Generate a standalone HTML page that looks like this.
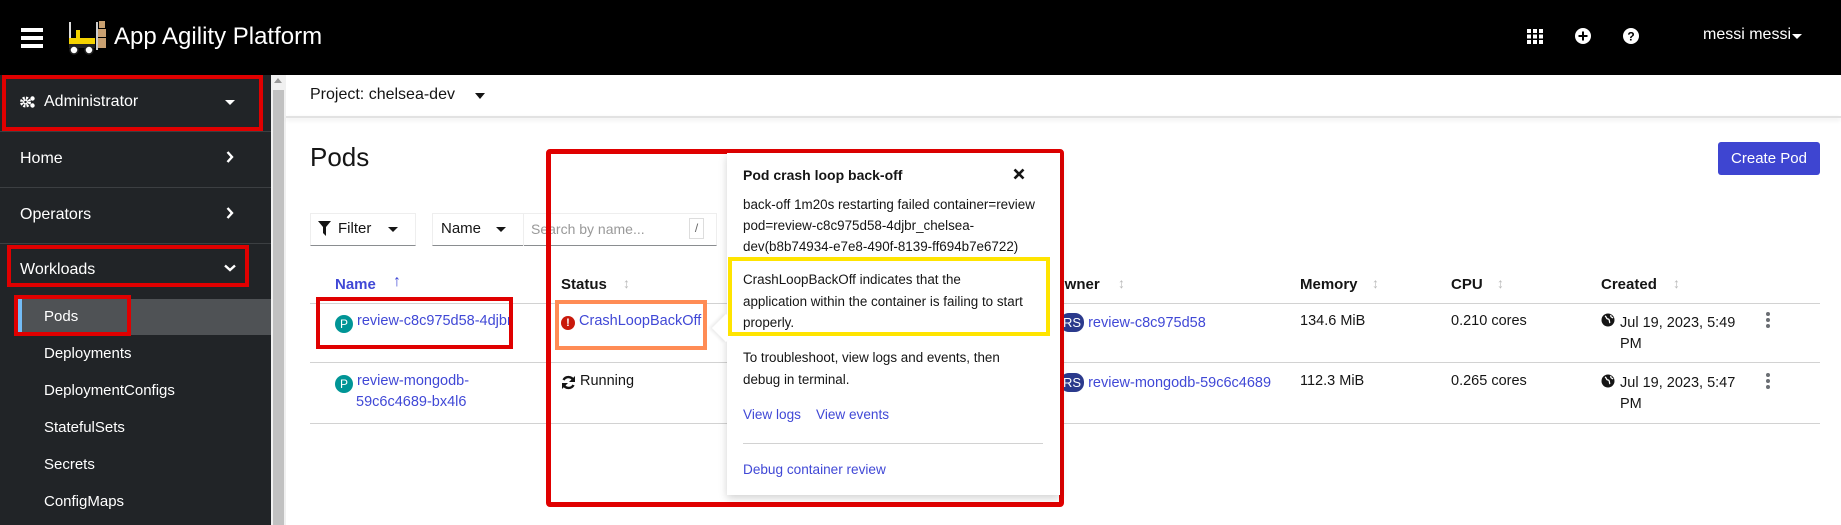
<!DOCTYPE html>
<html><head><meta charset="utf-8"><style>
*{box-sizing:border-box;margin:0;padding:0}
body{width:1841px;height:525px;overflow:hidden;background:#fff;font-family:"Liberation Sans",sans-serif;position:relative;color:#151515}
.a{position:absolute;white-space:nowrap}
.hdr{left:0;top:0;width:1841px;height:75px;background:#000}
.side{left:0;top:75px;width:271px;height:450px;background:#212427}
.sb{left:271px;top:75px;width:15px;height:450px;background:#f0f0f0}
.sbt{left:273px;top:90px;width:11px;height:435px;background:#c1c1c1}
.nav{color:#fff;font-size:16px}
.sep{left:0;width:271px;height:1px;background:#3c3f42}
.sub{color:#fff;font-size:15px;left:44px}
.red{border:4px solid #e00000}
.lnk{color:#4048d6}
.th{font-weight:bold;font-size:15px;color:#151515}
.td{font-size:14.5px}
.row{left:310px;width:1510px;height:1px;background:#d2d2d2}
.sort{color:#bbb;font-size:14px}
.pop p{font-size:13.4px;line-height:21px}
.badge{display:inline-block;width:18px;height:18px;border-radius:50%;background:#009596;color:#fff;font-size:12px;text-align:center;line-height:18px;vertical-align:-3px}
.rs{display:inline-block;background:#2b3a8c;color:#fff;font-size:13px;padding:0 3px;border-radius:9px;line-height:19px;vertical-align:0}
</style></head><body>
<div class="a hdr"></div>
<div class="a" style="left:21px;top:28px;width:22px;height:4px;background:#fff;box-shadow:0 8px 0 #fff,0 16px 0 #fff"></div>
<svg class="a" style="left:66px;top:18px" width="42" height="38" viewBox="0 0 42 38">
<rect x="3" y="4" width="2" height="18" fill="#ddd"/><rect x="10" y="12" width="4" height="8" fill="#f0d000"/>
<rect x="3" y="20" width="26" height="10" fill="#f5d300"/><rect x="3" y="26" width="26" height="4" fill="#222"/>
<circle cx="8" cy="32" r="4" fill="#fff" stroke="#222" stroke-width="1.5"/><circle cx="23" cy="32" r="4" fill="#fff" stroke="#222" stroke-width="1.5"/>
<rect x="30" y="4" width="2" height="28" fill="#ccc"/>
<rect x="33" y="3" width="6" height="7" fill="#c9a070"/><rect x="32" y="11" width="8" height="8" fill="#c9a070"/><rect x="32" y="20" width="8" height="10" fill="#c9a070"/>
</svg>
<div class="a" style="left:114px;top:23px;color:#fff;font-size:24px">App Agility Platform</div>
<svg class="a" style="left:1527px;top:29px" width="16" height="15" viewBox="0 0 16 15" fill="#fff"><rect x="0" y="0" width="4" height="4"/><rect x="6" y="0" width="4" height="4"/><rect x="12" y="0" width="4" height="4"/><rect x="0" y="5.5" width="4" height="4"/><rect x="6" y="5.5" width="4" height="4"/><rect x="12" y="5.5" width="4" height="4"/><rect x="0" y="11" width="4" height="4"/><rect x="6" y="11" width="4" height="4"/><rect x="12" y="11" width="4" height="4"/></svg>
<svg class="a" style="left:1575px;top:28px" width="16" height="16" viewBox="0 0 16 16"><circle cx="8" cy="8" r="8" fill="#fff"/><rect x="7" y="3.5" width="2" height="9" fill="#000"/><rect x="3.5" y="7" width="9" height="2" fill="#000"/></svg>
<svg class="a" style="left:1623px;top:28px" width="16" height="16" viewBox="0 0 16 16"><circle cx="8" cy="8" r="8" fill="#fff"/><text x="8" y="12.5" font-size="12" font-weight="bold" text-anchor="middle" font-family="Liberation Sans" fill="#000">?</text></svg>
<div class="a" style="left:1703px;top:26px;color:#fff;font-size:16px">messi messi</div>
<div class="a" style="left:1792px;top:34px;border-left:5px solid transparent;border-right:5px solid transparent;border-top:5px solid #fff"></div>

<div class="a side"></div>
<div class="a sb"></div><div class="a sbt"></div>
<div class="a" style="left:274px;top:78px;border-left:4px solid transparent;border-right:4px solid transparent;border-bottom:5px solid #999"></div>
<div class="a sep" style="top:131px"></div><div class="a sep" style="top:187px"></div><div class="a sep" style="top:243px"></div>
<svg class="a" style="left:20px;top:95px" width="16" height="14" viewBox="0 0 16 14"><circle cx="5.5" cy="7" r="4" fill="none" stroke="#fff" stroke-width="3" stroke-dasharray="2 1.2"/><circle cx="5.5" cy="7" r="2.5" fill="#fff"/><circle cx="5.5" cy="7" r="1.2" fill="#212427"/><circle cx="12.5" cy="3.5" r="2.2" fill="#fff"/><circle cx="12.5" cy="10.5" r="2.2" fill="#fff"/></svg>
<div class="a nav" style="left:44px;top:93px">Administrator</div>
<div class="a" style="left:225px;top:100px;border-left:5px solid transparent;border-right:5px solid transparent;border-top:5px solid #fff"></div>
<div class="a red" style="left:2px;top:75px;width:261px;height:56px"></div>
<div class="a nav" style="left:20px;top:150px">Home</div>
<svg class="a" style="left:226px;top:151px" width="8" height="12" viewBox="0 0 8 12"><path d="M1.5 1l4.5 5-4.5 5" stroke="#fff" stroke-width="2.4" fill="none"/></svg>
<div class="a nav" style="left:20px;top:206px">Operators</div>
<svg class="a" style="left:226px;top:207px" width="8" height="12" viewBox="0 0 8 12"><path d="M1.5 1l4.5 5-4.5 5" stroke="#fff" stroke-width="2.4" fill="none"/></svg>
<div class="a nav" style="left:20px;top:261px">Workloads</div>
<svg class="a" style="left:224px;top:264px" width="12" height="8" viewBox="0 0 12 8"><path d="M1 1.5l5 4.5 5-4.5" stroke="#fff" stroke-width="2.4" fill="none"/></svg>
<div class="a red" style="left:7px;top:245px;width:242px;height:42px"></div>
<div class="a" style="left:16px;top:299px;width:255px;height:36px;background:#4f5255"></div>
<div class="a" style="left:18px;top:299px;width:4px;height:36px;background:#73bcf7"></div>
<div class="a sub" style="top:308px">Pods</div>
<div class="a red" style="left:14px;top:295px;width:117px;height:41px"></div>
<div class="a sub" style="top:345px">Deployments</div>
<div class="a sub" style="top:382px">DeploymentConfigs</div>
<div class="a sub" style="top:419px">StatefulSets</div>
<div class="a sub" style="top:456px">Secrets</div>
<div class="a sub" style="top:493px">ConfigMaps</div>

<div class="a" style="left:286px;top:116px;width:1555px;height:2px;background:#e2e2e2;box-shadow:0 2px 4px rgba(0,0,0,.1)"></div>
<div class="a" style="left:310px;top:86px;font-size:16px">Project: chelsea-dev</div>
<div class="a" style="left:475px;top:93px;border-left:5px solid transparent;border-right:5px solid transparent;border-top:6px solid #151515"></div>
<div class="a" style="left:310px;top:142px;font-size:26px">Pods</div>
<div class="a" style="left:1718px;top:142px;width:102px;height:33px;background:#3e45d1;border-radius:3px;color:#fff;font-size:15px;text-align:center;line-height:33px">Create Pod</div>

<div class="a" style="left:310px;top:213px;width:106px;height:33px;border:1px solid #eee;border-bottom:1.5px solid #8a8d90"></div>
<svg class="a" style="left:318px;top:221px" width="13" height="15" viewBox="0 0 13 15"><path d="M0 0h13L8 6v9L5 12V6z" fill="#151515"/></svg>
<div class="a" style="left:338px;top:220px;font-size:15px">Filter</div>
<div class="a" style="left:388px;top:227px;border-left:5px solid transparent;border-right:5px solid transparent;border-top:5px solid #151515"></div>
<div class="a" style="left:432px;top:213px;width:285px;height:33px;border:1px solid #eee;border-bottom:1.5px solid #8a8d90"></div>
<div class="a" style="left:523px;top:213px;width:1px;height:33px;background:#eee"></div>
<div class="a" style="left:441px;top:220px;font-size:15px">Name</div>
<div class="a" style="left:496px;top:227px;border-left:5px solid transparent;border-right:5px solid transparent;border-top:5px solid #151515"></div>
<div class="a" style="left:531px;top:221px;font-size:14px;color:#999">Search by name...</div>
<div class="a" style="left:689px;top:218px;width:15px;height:21px;border:1px solid #ddd;font-size:12px;color:#666;text-align:center;line-height:19px">/</div>

<div class="a th" style="left:335px;top:276px;color:#4048d6">Name</div>
<div class="a" style="left:393px;top:273px;color:#4048d6;font-size:16px;font-weight:bold">↑</div>
<div class="a th" style="left:561px;top:276px">Status</div><div class="a sort" style="left:623px;top:275px">↕</div>
<div class="a th" style="left:1053px;top:276px">Owner</div><div class="a sort" style="left:1118px;top:275px">↕</div>
<div class="a th" style="left:1300px;top:276px">Memory</div><div class="a sort" style="left:1372px;top:275px">↕</div>
<div class="a th" style="left:1451px;top:276px">CPU</div><div class="a sort" style="left:1497px;top:275px">↕</div>
<div class="a th" style="left:1601px;top:276px">Created</div><div class="a sort" style="left:1673px;top:275px">↕</div>
<div class="a row" style="top:303px"></div><div class="a row" style="top:362px"></div><div class="a row" style="top:423px"></div>

<div class="a td" style="left:335px;top:313px"><span class="badge">P</span> <span class="lnk">review-c8c975d58-4djbr</span></div>
<div class="a red" style="left:316px;top:297px;width:197px;height:52px"></div>
<div class="a td" style="left:335px;top:373px"><span class="badge">P</span> <span class="lnk">review-mongodb-</span></div>
<div class="a td lnk" style="left:356px;top:394px">59c6c4689-bx4l6</div>

<div class="a td" style="left:561px;top:313px"><span style="display:inline-block;width:14px;height:14px;border-radius:50%;background:#c9190b;color:#fff;font-size:11px;font-weight:bold;text-align:center;line-height:14px;vertical-align:-1px">!</span> <span class="lnk">CrashLoopBackOff</span></div>
<div class="a" style="left:555px;top:300px;width:152px;height:50px;border:4px solid #ff8c55"></div>
<svg class="a" style="left:561px;top:375px" width="15" height="15" viewBox="0 0 15 15"><path d="M12.5 5.5A5.5 5.5 0 0 0 2.5 5" stroke="#151515" stroke-width="2.4" fill="none"/><path d="M2.5 9.5A5.5 5.5 0 0 0 12.5 10" stroke="#151515" stroke-width="2.4" fill="none"/><path d="M14 1v6h-6z" fill="#151515"/><path d="M1 14V8h6z" fill="#151515"/></svg>
<div class="a td" style="left:580px;top:373px">Running</div>

<div class="a td" style="left:1060px;top:313px"><span class="rs">RS</span> <span class="lnk">review-c8c975d58</span></div>
<div class="a td" style="left:1060px;top:373px"><span class="rs">RS</span> <span class="lnk">review-mongodb-59c6c4689</span></div>
<div class="a td" style="left:1300px;top:313px">134.6 MiB</div><div class="a td" style="left:1300px;top:373px">112.3 MiB</div>
<div class="a td" style="left:1451px;top:313px">0.210 cores</div><div class="a td" style="left:1451px;top:373px">0.265 cores</div>
<svg class="a" style="left:1601px;top:313px" width="14" height="14" viewBox="0 0 14 14"><circle cx="7" cy="7" r="6.5" fill="#151515"/><path d="M4 3c2 1 1 3 3 3s1 3 2 4M10 2c-1 2 1 2 2 3" stroke="#fff" stroke-width="1.3" fill="none"/></svg>
<div class="a td" style="left:1620px;top:313px;line-height:21px">Jul 19, 2023, 5:49<br>PM</div>
<svg class="a" style="left:1601px;top:374px" width="14" height="14" viewBox="0 0 14 14"><circle cx="7" cy="7" r="6.5" fill="#151515"/><path d="M4 3c2 1 1 3 3 3s1 3 2 4M10 2c-1 2 1 2 2 3" stroke="#fff" stroke-width="1.3" fill="none"/></svg>
<div class="a td" style="left:1620px;top:373px;line-height:21px">Jul 19, 2023, 5:47<br>PM</div>
<div class="a" style="left:1766px;top:312px;width:4px;height:4px;background:#6a6e73;border-radius:2px;box-shadow:0 6px 0 #6a6e73,0 12px 0 #6a6e73"></div>
<div class="a" style="left:1766px;top:373px;width:4px;height:4px;background:#6a6e73;border-radius:2px;box-shadow:0 6px 0 #6a6e73,0 12px 0 #6a6e73"></div>

<div class="a red" style="left:546px;top:149px;width:518px;height:358px;border-width:5px;border-radius:4px"></div>
<div class="a pop" style="left:727px;top:153px;width:333px;height:342px;background:#fff;box-shadow:0 3px 8px rgba(0,0,0,.18)"></div>
<div class="a" style="left:716px;top:318px;width:20px;height:20px;background:#fff;transform:rotate(45deg);box-shadow:-2px 2px 3px rgba(0,0,0,.08)"></div>
<div class="a" style="left:743px;top:167px;font-size:14px;font-weight:bold">Pod crash loop back-off</div>
<svg class="a" style="left:1013px;top:168px" width="12" height="12" viewBox="0 0 12 12"><path d="M1.5 1.5l9 9M10.5 1.5l-9 9" stroke="#151515" stroke-width="2.6"/></svg>
<div class="a pop" style="left:743px;top:194px"><p>back-off 1m20s restarting failed container=review<br>pod=review-c8c975d58-4djbr_chelsea-<br>dev(b8b74934-e7e8-490f-8139-ff694b7e6722)</p></div>
<div class="a pop" style="left:743px;top:269px"><p style="line-height:21.5px">CrashLoopBackOff indicates that the<br>application within the container is failing to start<br>properly.</p></div>
<div class="a" style="left:728px;top:257px;width:322px;height:79px;border:4px solid #ffe400"></div>
<div class="a pop" style="left:743px;top:347px"><p style="line-height:22px">To troubleshoot, view logs and events, then<br>debug in terminal.</p></div>
<div class="a lnk" style="left:743px;top:407px;font-size:13.6px">View logs</div>
<div class="a lnk" style="left:816px;top:407px;font-size:13.6px">View events</div>
<div class="a" style="left:743px;top:443px;width:300px;height:1px;background:#d2d2d2"></div>
<div class="a lnk" style="left:743px;top:462px;font-size:13.6px">Debug container review</div>
</body></html>
